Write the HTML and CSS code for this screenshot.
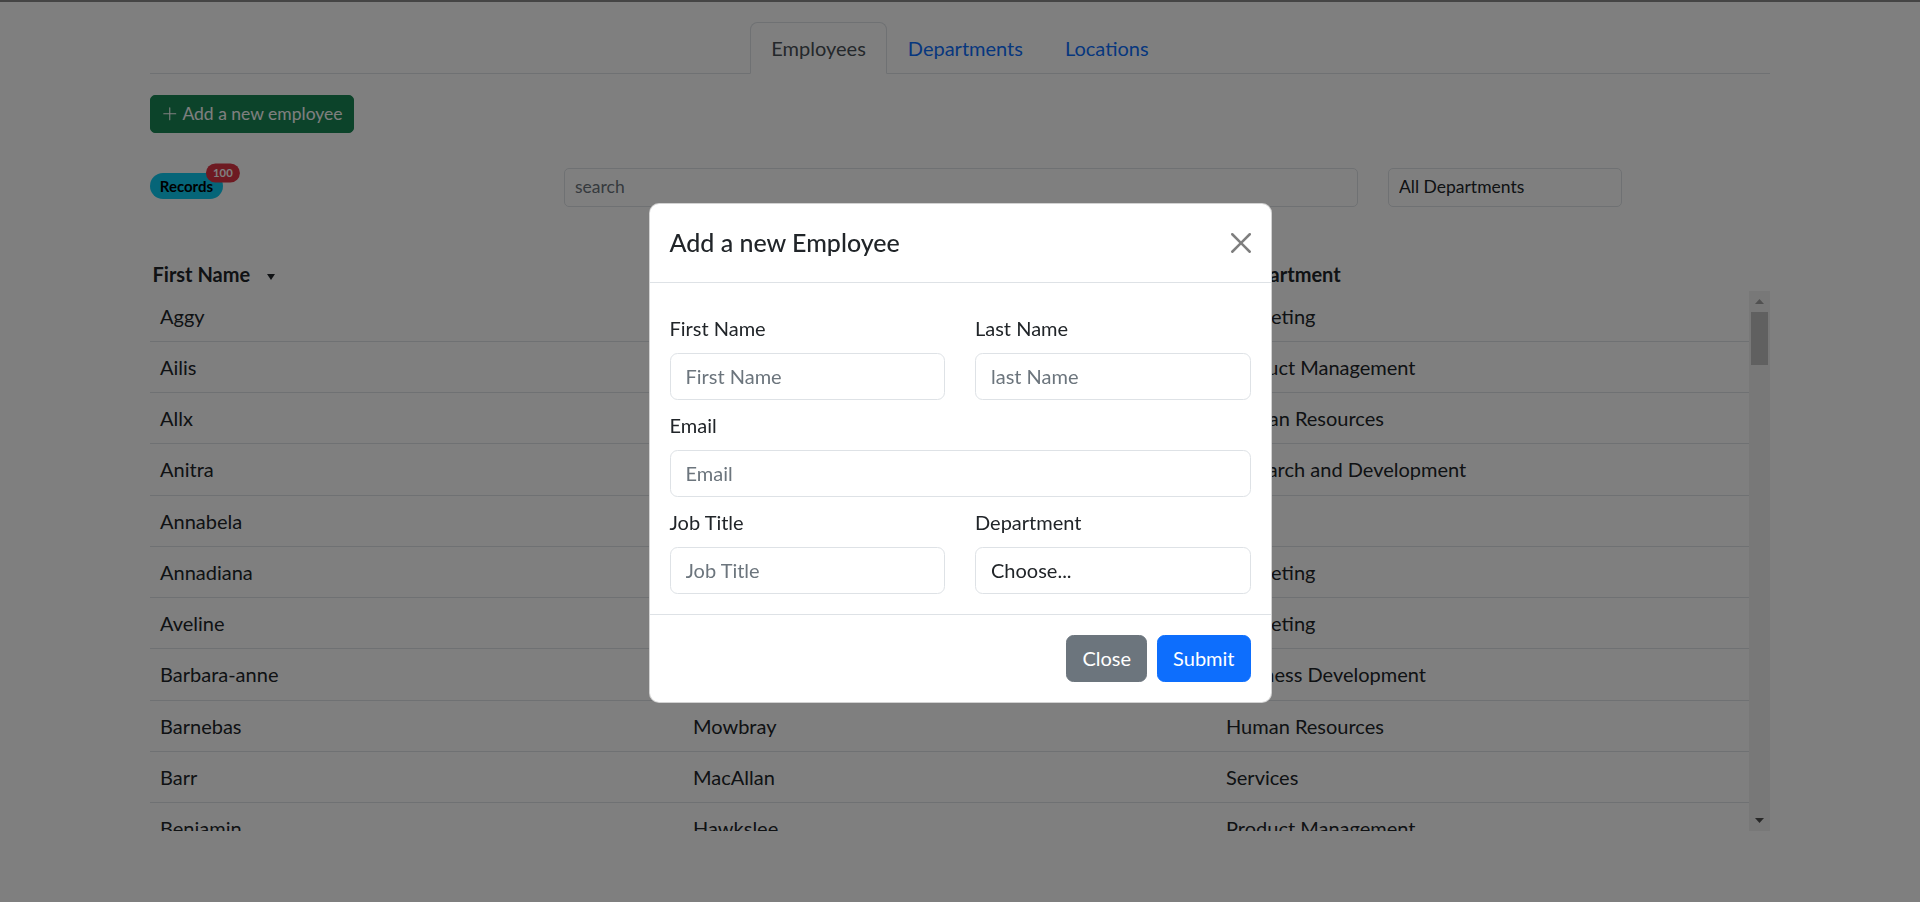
FILE: index.html
```html
<!DOCTYPE html>
<html lang="en">
<head>
<meta charset="utf-8">
<title>Company Directory</title>
<link rel="stylesheet" href="styles.css">
</head>
<body>
<div class="page">
  <div class="container">
    <ul class="tabs">
      <li><a class="tab active" href="#">Employees</a></li>
      <li><a class="tab" href="#">Departments</a></li>
      <li><a class="tab" href="#">Locations</a></li>
    </ul>

    <div class="toolbar">
      <button class="btn-add" type="button"><svg class="ico-plus" viewBox="0 0 16 16" width="17.5" height="17.5"><path d="M8 2a.5.5 0 0 1 .5.5v5h5a.5.5 0 0 1 0 1h-5v5a.5.5 0 0 1-1 0v-5h-5a.5.5 0 0 1 0-1h5v-5A.5.5 0 0 1 8 2"/></svg> Add a new employee</button>
    </div>

    <div class="filters">
      <div class="records-col">
        <span class="pill pill-info">Records<span class="pill pill-danger count">100</span></span>
      </div>
      <input class="input-sm" type="text" placeholder="search">
      <select class="input-sm select-plain"><option>All Departments</option></select>
    </div>

    <div class="thead">
      <div class="th">First Name <svg class="sort" viewBox="0 0 8 6" width="8" height="6"><path d="M0 0h8L4 6z"/></svg></div>
      <div class="th">Last Name</div>
      <div class="th">Department</div>
    </div>

    <div class="tbody-wrap">
      <div class="rows">
        <table class="grid">
          <tbody>
            <tr><td>Aggy</td><td>Grinaway</td><td>Marketing</td></tr>
            <tr><td>Ailis</td><td>Kissock</td><td>Product Management</td></tr>
            <tr><td>Allx</td><td>Spragg</td><td>Human Resources</td></tr>
            <tr><td>Anitra</td><td>Craigg</td><td>Research and Development</td></tr>
            <tr><td>Annabela</td><td>Boyn</td><td>Sales</td></tr>
            <tr><td>Annadiana</td><td>Clohessy</td><td>Marketing</td></tr>
            <tr><td>Aveline</td><td>Edgson</td><td>Marketing</td></tr>
            <tr><td>Barbara-anne</td><td>Kenchington</td><td>Business Development</td></tr>
            <tr><td>Barnebas</td><td>Mowbray</td><td>Human Resources</td></tr>
            <tr><td>Barr</td><td>MacAllan</td><td>Services</td></tr>
            <tr><td>Benjamin</td><td>Hawkslee</td><td>Product Management</td></tr>
            <tr><td>Berty</td><td>Lammas</td><td>Training</td></tr>
          </tbody>
        </table>
      </div>
      <div class="scrollbar">
        <div class="sb-btn"><svg viewBox="0 0 9 5" width="9" height="5"><path class="arrow-off" d="M0 5L4.5 0 9 5z"/></svg></div>
        <div class="sb-track"><div class="sb-thumb"></div></div>
        <div class="sb-btn"><svg viewBox="0 0 9 5" width="9" height="5"><path class="arrow-on" d="M0 0h9L4.5 5z"/></svg></div>
      </div>
    </div>
  </div>
</div>

<div class="backdrop"></div>

<div class="modal-wrap">
  <div class="modal">
    <div class="modal-header">
      <h5 class="modal-title">Add a new Employee</h5>
      <button class="btn-close" type="button" aria-label="Close"><svg viewBox="0 0 16 16" width="20" height="20"><path d="M.293.293a1 1 0 0 1 1.414 0L8 6.586 14.293.293a1 1 0 1 1 1.414 1.414L9.414 8l6.293 6.293a1 1 0 0 1-1.414 1.414L8 9.414l-6.293 6.293a1 1 0 0 1-1.414-1.414L6.586 8 .293 1.707a1 1 0 0 1 0-1.414z"/></svg></button>
    </div>
    <div class="modal-body">
      <div class="form-grid">
        <div class="field">
          <label class="form-label">First Name</label>
          <input class="form-control" type="text" placeholder="First Name">
        </div>
        <div class="field">
          <label class="form-label">Last Name</label>
          <input class="form-control" type="text" placeholder="last Name">
        </div>
        <div class="field span-2">
          <label class="form-label">Email</label>
          <input class="form-control" type="email" placeholder="Email">
        </div>
        <div class="field">
          <label class="form-label">Job Title</label>
          <input class="form-control" type="text" placeholder="Job Title">
        </div>
        <div class="field">
          <label class="form-label">Department</label>
          <select class="form-control select-plain"><option>Choose...</option></select>
        </div>
      </div>
    </div>
    <div class="modal-footer">
      <button class="btn btn-secondary" type="button">Close</button>
      <button class="btn btn-primary" type="button">Submit</button>
    </div>
  </div>
</div>
</body>
</html>
```

FILE: styles.css
```css
* { box-sizing: border-box; }

html, body { margin: 0; padding: 0; }

body {
  font-family: Lato, "Segoe UI", "Noto Sans", sans-serif;
  font-size: 20px;
  line-height: 1.5;
  color: #212529;
  background: #fff;
  border-top: 2px solid #8a8a8a;
  height: 902px;
  overflow: hidden;
}

.container {
  width: 1620px;
  margin: 0 auto;
}

/* tabs */
.tabs {
  display: flex;
  justify-content: center;
  list-style: none;
  margin: 20px 0 0;
  padding: 0;
  border-bottom: 1px solid #dee2e6;
}
.tab {
  display: block;
  padding: 10px 20px;
  margin-bottom: -1px;
  border: 1px solid transparent;
  border-top-left-radius: 7.5px;
  border-top-right-radius: 7.5px;
  color: #0d6efd;
  text-decoration: none;
}
.tab.active {
  color: #495057;
  background: #fff;
  border-color: #dee2e6 #dee2e6 #fff;
}

/* add button */
.toolbar {
  display: flex;
  margin-top: 21px;
}
.btn-add {
  font-family: inherit;
  font-size: 17.5px;
  line-height: 1.5;
  padding: 5px 10px;
  border: 1px solid #198754;
  border-radius: 5px;
  background: #198754;
  color: #fff;
}
.ico-plus {
  fill: currentColor;
  vertical-align: -2px;
}

/* filters */
.filters {
  display: grid;
  grid-template-columns: 384px 794px 234px;
  column-gap: 30px;
  align-items: start;
  margin-top: 35px;
}
.records-col {
  display: flex;
  align-items: flex-start;
  padding-top: 5px;
}
.pill {
  display: inline-block;
  position: relative;
  font-weight: 700;
  line-height: 1;
  border-radius: 50rem;
  white-space: nowrap;
}
.pill-info {
  background: #0dcaf0;
  color: #000;
  font-size: 15px;
  padding: 5.25px 9.75px;
}
.pill-danger {
  background: #dc3545;
  color: #fff;
}
.count {
  position: absolute;
  top: 0;
  left: 100%;
  transform: translate(-50%, -50%);
  font-size: 11.25px;
  padding: 3.9px 7.3px;
}
.input-sm {
  display: block;
  width: 100%;
  font-family: inherit;
  font-size: 17.5px;
  line-height: 1.5;
  padding: 5px 10px;
  color: #212529;
  background: #fff;
  border: 1px solid #dee2e6;
  border-radius: 5px;
}
.input-sm::placeholder { color: #6c757d; }
.select-plain {
  appearance: none;
  -webkit-appearance: none;
}

/* table */
.thead {
  display: grid;
  grid-template-columns: 540px 540px 540px;
  margin-top: 52px;
  padding-bottom: 2px;
  font-weight: 700;
}
.th {
  padding-left: 2.5px;
  line-height: 30px;
  white-space: nowrap;
}
.sort {
  margin-left: 12px;
  vertical-align: 2px;
  fill: #212529;
}
.tbody-wrap {
  display: flex;
  height: 540px;
}
.rows {
  flex: 1;
  overflow: hidden;
}
.grid {
  width: 1599px;
  border-collapse: collapse;
  table-layout: fixed;
}
.grid td {
  width: 533px;
  padding: 10px 10px 10.25px;
  line-height: 30px;
  border-bottom: 1px solid #dee2e6;
  white-space: nowrap;
}

/* drawn scrollbar */
.scrollbar {
  width: 21px;
  display: flex;
  flex-direction: column;
  background: #f1f1f1;
}
.sb-btn {
  height: 21px;
  display: flex;
  align-items: center;
  justify-content: center;
}
.sb-track {
  flex: 1;
  padding: 0 2px;
}
.sb-thumb {
  height: 53px;
  background: #c1c1c1;
}
.arrow-off { fill: #a3a3a3; }
.arrow-on { fill: #505050; }

/* modal */
.backdrop {
  position: fixed;
  inset: 0;
  background: rgba(0, 0, 0, 0.5);
}
.modal-wrap {
  position: fixed;
  inset: 0;
  display: flex;
  align-items: center;
  justify-content: center;
  padding-top: 4px;
}
.modal {
  width: 623px;
  background: #fff;
  border: 1px solid rgba(0, 0, 0, 0.175);
  border-radius: 10px;
}
.modal-header {
  display: flex;
  align-items: center;
  justify-content: space-between;
  padding: 20px;
  border-bottom: 1px solid #dee2e6;
}
.modal-title {
  margin: 0;
  font-size: 25px;
  font-weight: 500;
  line-height: 1.5;
}
.btn-close {
  width: 20px;
  height: 20px;
  padding: 0;
  border: 0;
  background: none;
  opacity: 0.5;
  display: flex;
}
.btn-close svg { fill: #000; }

.modal-body { padding: 20px; }
.form-grid {
  display: grid;
  grid-template-columns: 1fr 1fr;
  column-gap: 30px;
  row-gap: 10px;
  margin-top: 10px;
}
.span-2 { grid-column: span 2; }
.form-label {
  display: block;
  margin-bottom: 10px;
}
.form-control {
  display: block;
  width: 100%;
  font-family: inherit;
  font-size: 20px;
  line-height: 1.5;
  padding: 7.5px 15px;
  color: #212529;
  background: #fff;
  border: 1px solid #dee2e6;
  border-radius: 7.5px;
}
.form-control::placeholder { color: #6c757d; }

.modal-footer {
  display: flex;
  justify-content: flex-end;
  padding: 15px;
  border-top: 1px solid #dee2e6;
}
.btn {
  margin: 5px;
  font-family: inherit;
  font-size: 20px;
  line-height: 1.5;
  padding: 7.5px 15px;
  border: 1px solid transparent;
  border-radius: 7.5px;
  color: #fff;
}
.btn-secondary { background: #6c757d; border-color: #6c757d; }
.btn-primary { background: #0d6efd; border-color: #0d6efd; }
```
